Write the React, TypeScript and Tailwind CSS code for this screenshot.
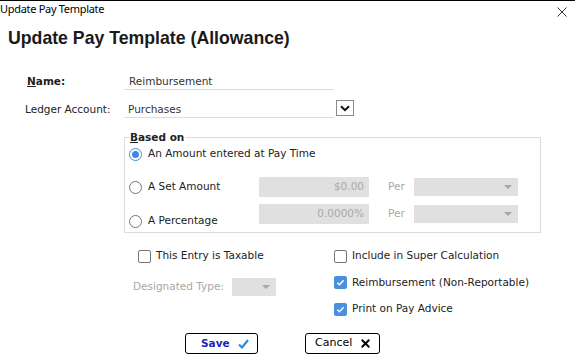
import { X } from "lucide-react"

const Check = ({ checked = false }: { checked?: boolean }) =>
  checked ? (
    <span className="flex h-[13px] w-[13px] items-center justify-center rounded-[2px] bg-[#4a8fe0]">
      <svg width="9" height="9" viewBox="0 0 10 10" fill="none">
        <path d="M1.5 5.2l2.3 2.3 4.7-5" stroke="white" strokeWidth="1.6" />
      </svg>
    </span>
  ) : (
    <span className="h-[13px] w-[13px] rounded-[2px] border border-[#767676] bg-white" />
  )

const Radio = ({ checked = false }: { checked?: boolean }) =>
  checked ? (
    <span className="flex h-[13px] w-[13px] items-center justify-center rounded-full border border-[#3b8be6] bg-white">
      <span className="h-[7px] w-[7px] rounded-full bg-[#3b8be6]" />
    </span>
  ) : (
    <span className="h-[13px] w-[13px] rounded-full border border-[#767676] bg-white" />
  )

const Caret = () => (
  <svg width="8" height="4" viewBox="0 0 8 4">
    <path d="M0 0h8L4 4z" fill="#a8a8a8" />
  </svg>
)

const GraySelect = ({ w }: { w: string }) => (
  <div className={`flex h-[18px] ${w} items-center justify-end bg-[#e0e0e0] pr-[6px]`}>
    <Caret />
  </div>
)

export default function App() {
  return (
    <div className="h-[361px] w-[575px] overflow-hidden border-t border-black bg-white font-['DejaVu_Sans',sans-serif] text-[10.5px] text-[#222]">
      {/* title bar */}
      <div className="flex h-[26px] items-start justify-between">
        <span className="font-['Noto_Sans',sans-serif] text-[11px] leading-[16px] tracking-[-0.3px] text-black">Update Pay Template</span>
        <svg className="mr-[8px] mt-[6px]" width="10" height="10" viewBox="0 0 10 10">
          <path d="M0.5 0.5l9 9M9.5 0.5l-9 9" stroke="#333" strokeWidth="1" />
        </svg>
      </div>

      <h1 className="ml-[8px] font-['Liberation_Sans',sans-serif] text-[17.7px] font-bold leading-[22px] text-[#1a1a1a]">
        Update Pay Template (Allowance)
      </h1>

      {/* name / ledger */}
      <div className="mt-[25px] flex flex-col gap-[12px] pl-[25px]">
        <div className="flex items-center">
          <span className="w-[99px] pl-[2px] font-bold">
            <span className="underline">N</span>ame:
          </span>
          <div className="flex h-[16px] w-[210px] items-center border-b border-[#dcdcdc] pl-[5px] text-[#333]">Reimbursement</div>
        </div>
        <div className="flex items-center">
          <span className="w-[99px]">Ledger Account:</span>
          <div className="flex h-[16px] w-[210px] items-center border-b border-[#dcdcdc] pl-[4px] text-[#333]">Purchases</div>
          <div className="ml-[2px] flex h-[16px] w-[18px] -translate-y-[2px] items-center justify-center border border-[#8a8a8a]">
            <svg width="10" height="7" viewBox="0 0 10 7">
              <path d="M1 1.2l4 4 4-4" stroke="#111" strokeWidth="2" fill="none" />
            </svg>
          </div>
        </div>
      </div>

      {/* based on */}
      <fieldset className="ml-[124px] mt-[12px] w-[417px] border border-[#dcdcdc] pb-[8px] pl-[4px]">
        <legend className="px-[1px] font-bold leading-[14px]">
          <span className="underline">B</span>ased on
        </legend>
        <div className="flex h-[20px] items-center gap-[6px]">
          <Radio checked />
          <span>An Amount entered at Pay Time</span>
        </div>
        <div className="mt-[13px] flex h-[20px] items-center">
          <div className="flex w-[130px] items-center gap-[6px]">
            <Radio />
            <span>A Set Amount</span>
          </div>
          <div className="flex h-[20px] w-[110px] items-center justify-end bg-[#e0e0e0] pr-[5px] text-[#a8a8a8]">$0.00</div>
          <span className="ml-[19px] w-[26px] text-[#a8a8a8]">Per</span>
          <GraySelect w="w-[104px]" />
        </div>
        <div className="mt-[7px] flex h-[20px] items-center">
          <div className="flex w-[130px] translate-y-[7px] items-center gap-[6px]">
            <Radio />
            <span>A Percentage</span>
          </div>
          <div className="flex h-[20px] w-[110px] items-center justify-end bg-[#e0e0e0] pr-[5px] text-[#a8a8a8]">0.0000%</div>
          <span className="ml-[19px] w-[26px] text-[#a8a8a8]">Per</span>
          <GraySelect w="w-[104px]" />
        </div>
      </fieldset>

      {/* options */}
      <div className="mt-[16px] flex">
        <div className="ml-[133px] flex w-[201px] flex-col">
          <div className="flex h-[14px] items-center gap-[5px] pl-[5px]">
            <Check />
            <span>This Entry is Taxable</span>
          </div>
          <div className="mt-[15px] flex h-[18px] items-center">
            <span className="w-[99px] text-[#a8a8a8]">Designated Type:</span>
            <GraySelect w="w-[44px]" />
          </div>
        </div>
        <div className="flex flex-col gap-[12.5px]">
          <div className="flex h-[14px] items-center gap-[5px]">
            <Check />
            <span>Include in Super Calculation</span>
          </div>
          <div className="flex h-[14px] items-center gap-[5px]">
            <Check checked />
            <span>Reimbursement (Non-Reportable)</span>
          </div>
          <div className="flex h-[14px] items-center gap-[5px]">
            <Check checked />
            <span>Print on Pay Advice</span>
          </div>
        </div>
      </div>

      {/* buttons */}
      <div className="mt-[17px] flex gap-[47px] pl-[185px]">
        <button className="flex h-[21px] w-[73px] items-center justify-between rounded-[3px] border border-black pl-[15px] pr-[8px]">
          <span className="font-bold text-[#2323b8]">Save</span>
          <svg width="11" height="10" viewBox="0 0 11 10">
            <path d="M1 5.5l3 3L10 1" stroke="#2a8fe0" strokeWidth="2.2" fill="none" />
          </svg>
        </button>
        <button className="flex h-[21px] w-[75px] items-center justify-between rounded-[3px] border border-black pl-[9px] pr-[7px]">
          <span className="text-[11px] text-black">Cancel</span>
          <X size={13} strokeWidth={3.5} color="#000" />
        </button>
      </div>
    </div>
  )
}
